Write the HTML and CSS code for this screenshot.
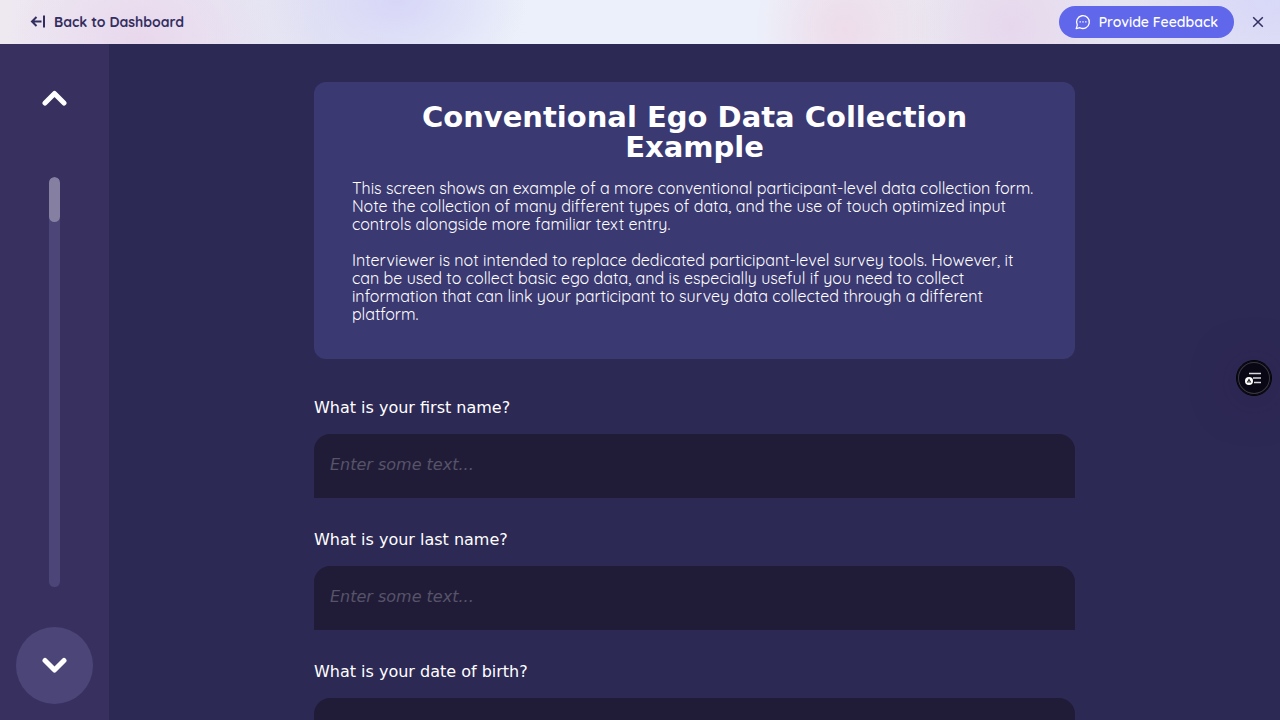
FILE: index.html
```html
<!DOCTYPE html>
<html lang="en">
<head>
<meta charset="utf-8">
<meta name="viewport" content="width=device-width, initial-scale=1">
<title>Conventional Ego Data Collection Example</title>
<link rel="stylesheet" href="styles.css">
</head>
<body class="app">
<header class="topbar">
  <a class="back" href="#">
    <svg width="16" height="14" viewBox="0 0 16 14" fill="none" stroke="currentColor" stroke-width="2" aria-hidden="true"><path d="M6.500 2 2 6.500l4.500 4.500M2 6.500h9.500M14 .5v12"/></svg>
    <span>Back to Dashboard</span>
  </a>
  <div class="actions">
    <button class="feedback" type="button">
      <svg width="16" height="16" viewBox="0 0 16 16" fill="none" stroke="currentColor" stroke-width="1.300" stroke-linejoin="round" aria-hidden="true"><path d="M2.300 11.100A6.400 6.400 0 1 1 4.900 13.700L1.200 14.600Z"/><path d="M4.500 7.800h1.400M7.300 7.800h1.400M10.100 7.800h1.400"/></svg>
      <span>Provide Feedback</span>
    </button>
    <button class="close" type="button" aria-label="Close">
      <svg width="12" height="12" viewBox="0 0 12 12" fill="none" stroke="currentColor" stroke-width="1.500" aria-hidden="true"><path d="M1.200 1.200l9.600 9.600M10.800 1.200l-9.600 9.600"/></svg>
    </button>
  </div>
</header>
<div class="workspace">
  <nav class="rail" aria-label="Interview navigation">
    <button class="step" type="button" aria-label="Previous">
      <svg width="26" height="18" viewBox="0 0 26 18" fill="none" stroke="currentColor" stroke-width="5" stroke-linecap="round" stroke-linejoin="round" aria-hidden="true"><path d="M3 13 12.500 3.500l9.500 9.500"/></svg>
    </button>
    <div class="progress"><div class="progress-value"></div></div>
    <button class="step step-next" type="button" aria-label="Next">
      <svg width="26" height="18" viewBox="0 0 26 18" fill="none" stroke="currentColor" stroke-width="5" stroke-linecap="round" stroke-linejoin="round" aria-hidden="true"><path d="M3 3.500 12.500 13l9.500-9.500"/></svg>
    </button>
  </nav>
  <main class="stage">
    <div class="column">
      <section class="intro">
        <h1 class="intro-title">Conventional Ego Data Collection Example</h1>
        <p class="intro-text">This screen shows an example of a more conventional participant-level data collection form. Note the collection of many different types of data, and the use of touch optimized input controls alongside more familiar text entry.</p>
        <p class="intro-text">Interviewer is not intended to replace dedicated participant-level survey tools. However, it can be used to collect basic ego data, and is especially useful if you need to collect information that can link your participant to survey data collected through a different platform.</p>
      </section>
      <form class="form">
        <div class="field">
          <label class="label" for="first-name">What is your first name?</label>
          <input class="input" id="first-name" type="text" placeholder="Enter some text...">
        </div>
        <div class="field">
          <label class="label" for="last-name">What is your last name?</label>
          <input class="input" id="last-name" type="text" placeholder="Enter some text...">
        </div>
        <div class="field">
          <label class="label" for="birth-date">What is your date of birth?</label>
          <input class="input" id="birth-date" type="text">
        </div>
      </form>
    </div>
  </main>
</div>
<button class="assistant" type="button" aria-label="Open assistant">
  <svg width="18" height="14" viewBox="0 0 18 14" aria-hidden="true"><path d="M4 2.500h12M8 7h8M9 11.500h7" stroke="#d8d8dc" stroke-width="1.500" fill="none"/><circle cx="4" cy="10" r="4" fill="#fff"/><path d="M4 7.500 6.300 11.600H1.700Z" fill="#111"/><path d="M4 9.700v1.900" stroke="#fff" stroke-width=".7"/></svg>
</button>
</body>
</html>
```
FILE: styles.css
```css
* { box-sizing: border-box; }

.app {
  margin: 0;
  height: 100vh;
  display: flex;
  flex-direction: column;
  overflow: hidden;
  background: #2d2955;
  color: #fff;
  font-family: "DejaVu Sans", sans-serif;
  font-size: 16px;
}

button {
  border: 0;
  padding: 0;
  background: none;
  color: inherit;
  font: inherit;
  cursor: pointer;
}

svg { display: block; flex: none; }

.topbar {
  flex: none;
  height: 44px;
  padding: 0 16px 0 30px;
  display: flex;
  align-items: center;
  justify-content: space-between;
  color: #332e60;
  font-family: Quicksand, Lato, sans-serif;
  font-size: 14px;
  font-weight: 600;
  background:
    radial-gradient(ellipse 130px 100px at 11% 90%, #e9d8ed, transparent),
    radial-gradient(ellipse 130px 90px at 31% 0%, #d7d6f8, transparent),
    radial-gradient(ellipse 90px 100px at 66% 70%, #eedcea, transparent),
    radial-gradient(ellipse 100px 100px at 79% 60%, #e7d7ed, transparent),
    radial-gradient(ellipse 130px 90px at 99% 0%, #d8d8f8, transparent),
    linear-gradient(90deg, #eee8f1, #e4e4f3 25%, #e8eef8 34%, #ecf0fa 42%, #ecf0fa 60%, #eae7f0 72%, #e1e1f4);
}

.back {
  display: flex;
  align-items: center;
  gap: 8px;
  color: inherit;
  font-weight: 700;
  text-decoration: none;
}

.actions { display: flex; align-items: center; gap: 18px; }

.feedback {
  height: 32px;
  padding: 0 16px;
  display: flex;
  align-items: center;
  gap: 8px;
  border-radius: 16px;
  background: #6067eb;
  color: #fff;
}

.workspace { flex: 1; min-height: 0; display: flex; }

.rail {
  flex: none;
  padding: 16px;
  display: flex;
  flex-direction: column;
  align-items: center;
  gap: 40px;
  background: #38315f;
}

.step {
  width: 77px;
  height: 77px;
  display: grid;
  place-items: center;
  border-radius: 50%;
}

.step-next { background: #4b4677; }

.progress {
  flex: 1;
  width: 11px;
  border-radius: 6px;
  background: #4b4677;
  overflow: hidden;
}

.progress-value { height: 11%; border-radius: 6px; background: #8580a1; }

.stage { flex: 1; min-width: 0; overflow: hidden; padding-top: 38px; }

.column { width: 65%; margin: 0 auto; }

.intro {
  padding: 20px 38px 36px;
  border-radius: 12px;
  background: #3b3972;
}

.intro-title {
  margin: 0 0 17px;
  font-size: 29px;
  line-height: 30px;
  text-align: center;
}

.intro-text {
  margin: 0 0 18px;
  font-family: Quicksand, Lato, sans-serif;
  font-weight: 400;
  line-height: 18px;
}

.intro-text:last-child { margin-bottom: 0; }

.form { margin-top: 40px; display: grid; gap: 33px; }

.field { display: grid; gap: 17px; }

.label { line-height: 18px; }

.input {
  width: 100%;
  height: 64px;
  padding: 0 16px 4px;
  border: 0;
  border-radius: 16px 16px 0 0;
  background: #201c38;
  color: #fff;
  font: inherit;
}

.input::placeholder { color: #575369; opacity: 1; font-style: italic; }

.assistant {
  position: fixed;
  right: 8px;
  top: 360px;
  width: 36px;
  height: 36px;
  display: grid;
  place-items: center;
  border: 1px solid #050409;
  border-radius: 50%;
  background: #090713;
  box-shadow: inset 0 0 0 1px #090713, inset 0 0 0 2px #393842, 0 4px 48px rgba(40, 20, 55, .4);
}
```
